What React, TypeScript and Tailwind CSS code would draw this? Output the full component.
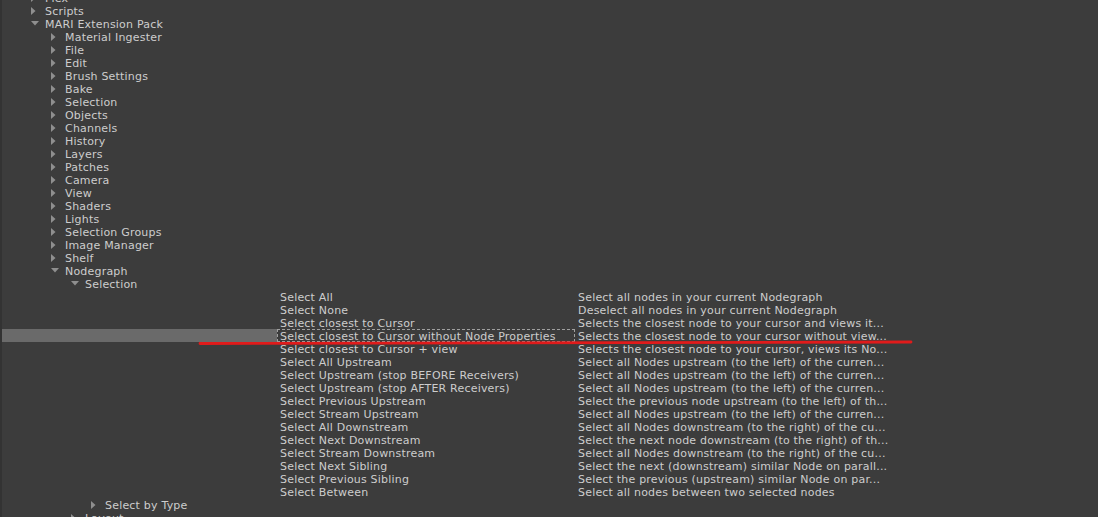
import React from "react";

type TreeItem = { label: string; level: number; state: "closed" | "open" };

const tree: TreeItem[] = [
  { label: "Flex", level: 1, state: "closed" },
  { label: "Scripts", level: 1, state: "closed" },
  { label: "MARI Extension Pack", level: 1, state: "open" },
  { label: "Material Ingester", level: 2, state: "closed" },
  { label: "File", level: 2, state: "closed" },
  { label: "Edit", level: 2, state: "closed" },
  { label: "Brush Settings", level: 2, state: "closed" },
  { label: "Bake", level: 2, state: "closed" },
  { label: "Selection", level: 2, state: "closed" },
  { label: "Objects", level: 2, state: "closed" },
  { label: "Channels", level: 2, state: "closed" },
  { label: "History", level: 2, state: "closed" },
  { label: "Layers", level: 2, state: "closed" },
  { label: "Patches", level: 2, state: "closed" },
  { label: "Camera", level: 2, state: "closed" },
  { label: "View", level: 2, state: "closed" },
  { label: "Shaders", level: 2, state: "closed" },
  { label: "Lights", level: 2, state: "closed" },
  { label: "Selection Groups", level: 2, state: "closed" },
  { label: "Image Manager", level: 2, state: "closed" },
  { label: "Shelf", level: 2, state: "closed" },
  { label: "Nodegraph", level: 2, state: "open" },
  { label: "Selection", level: 3, state: "open" },
];

const actions: [string, string][] = [
  ["Select All", "Select all nodes in your current Nodegraph"],
  ["Select None", "Deselect all nodes in your current Nodegraph"],
  ["Select closest to Cursor", "Selects the closest node to your cursor and views it..."],
  ["Select closest to Cursor without Node Properties", "Selects the closest node to your cursor without view..."],
  ["Select closest to Cursor + view", "Selects the closest node to your cursor, views its No..."],
  ["Select All Upstream", "Select all Nodes upstream (to the left) of the curren..."],
  ["Select Upstream (stop BEFORE Receivers)", "Select all Nodes upstream (to the left) of the curren..."],
  ["Select Upstream (stop AFTER Receivers)", "Select all Nodes upstream (to the left) of the curren..."],
  ["Select Previous Upstream", "Select the previous node upstream (to the left) of th..."],
  ["Select Stream Upstream", "Select all Nodes upstream (to the left) of the curren..."],
  ["Select All Downstream", "Select all Nodes downstream (to the right) of the cu..."],
  ["Select Next Downstream", "Select the next node downstream (to the right) of th..."],
  ["Select Stream Downstream", "Select all Nodes downstream (to the right) of the cu..."],
  ["Select Next Sibling", "Select the next (downstream) similar Node on parall..."],
  ["Select Previous Sibling", "Select the previous (upstream) similar Node on par..."],
  ["Select Between", "Select all nodes between two selected nodes"],
];

const Arrow = ({ state }: { state: "closed" | "open" }) =>
  state === "closed" ? (
    <svg width="5" height="8" viewBox="0 0 5 8" className="shrink-0">
      <path d="M0 0 L4.5 4 L0 8 Z" fill="#8f8f8f" />
    </svg>
  ) : (
    <svg width="8" height="5" viewBox="0 0 8 5" className="shrink-0">
      <path d="M0 0 L8 0 L4 4.5 Z" fill="#8f8f8f" />
    </svg>
  );

const TreeRow = ({ item }: { item: TreeItem }) => {
  const indent = { 1: "pl-[29px]", 2: "pl-[49px]", 3: "pl-[69px]", 4: "pl-[89px]" }[item.level];
  return (
    <div className={`flex items-center h-[13px] ${indent}`}>
      <div className="w-[14px] flex items-center">
        <Arrow state={item.state} />
      </div>
      <span className="translate-y-[1px]">{item.label}</span>
    </div>
  );
};

export default function App() {
  return (
    <div
      className="relative w-[1098px] h-[517px] overflow-hidden bg-[#3c3c3c] text-[#cdcdcd] text-[11px] leading-[13px] tracking-[0.2px] whitespace-nowrap"
      style={{ fontFamily: "Tahoma, 'DejaVu Sans', Verdana, sans-serif" }}
    >
      <div className="mt-[-9px] border-l-2 border-[#333333]">
        {tree.map((t, i) => (
          <TreeRow key={i} item={t} />
        ))}

        {actions.map(([name, desc], i) => {
          const selected = i === 3;
          return (
            <div key={i} className="flex h-[13px]">
              <div className={`w-[275px] ${selected ? "bg-[#6a6a6a]" : ""}`} />
              <div
                className={`w-[298px] ${
                  selected
                    ? "border border-dashed border-[#a0a0a0] leading-[11px] pl-[2px]"
                    : "pl-[3px]"
                }`}
              >
                <span className="block translate-y-[1px]">{name}</span>
              </div>
              <div className="pl-[3px]">
                <span className="block translate-y-[1px]">{desc}</span>
              </div>
            </div>
          );
        })}

        <TreeRow item={{ label: "Select by Type", level: 4, state: "closed" }} />
        <TreeRow item={{ label: "Layout", level: 3, state: "closed" }} />
      </div>

      {/* red annotation stroke */}
      <svg className="absolute left-0 top-0 pointer-events-none" width="1098" height="517">
        <line x1="200" y1="343.5" x2="911" y2="342" stroke="#e01b1b" strokeWidth="2.8" strokeLinecap="round" />
      </svg>
    </div>
  );
}
